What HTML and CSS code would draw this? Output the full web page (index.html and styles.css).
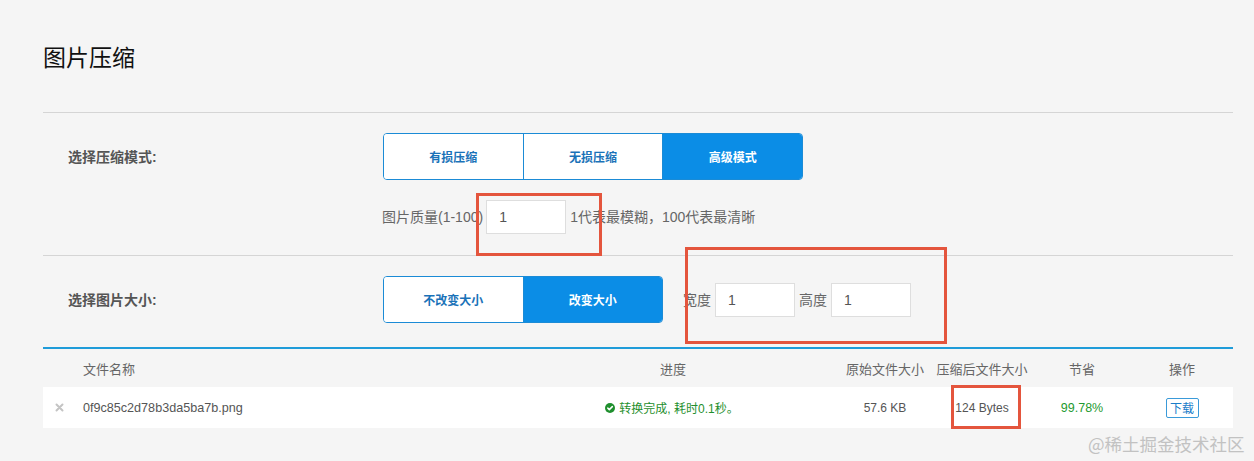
FILE: index.html
```html
<!DOCTYPE html>
<html lang="zh-CN">
<head>
<meta charset="utf-8">
<title>图片压缩</title>
<link rel="stylesheet" href="styles.css">
</head>
<body>
<div class="page">
  <h1 class="title">图片压缩</h1>

  <section class="opt">
    <div class="opt-label">选择压缩模式:</div>
    <div class="btn-group group-3">
      <button class="seg">有损压缩</button>
      <button class="seg">无损压缩</button>
      <button class="seg active">高级模式</button>
    </div>
    <div class="opt-extra">
      <span class="txt">图片质量(1-100)</span>
      <input class="field" type="text" value="1">
      <span class="txt">1代表最模糊，100代表最清晰</span>
    </div>
  </section>

  <section class="opt opt-size">
    <div class="opt-label">选择图片大小:</div>
    <div class="size-row">
      <div class="btn-group group-2">
        <button class="seg">不改变大小</button>
        <button class="seg active">改变大小</button>
      </div>
      <div class="dims">
        <span class="txt">宽度</span>
        <input class="field" type="text" value="1">
        <span class="txt">高度</span>
        <input class="field" type="text" value="1">
      </div>
    </div>
  </section>

  <div class="table">
    <div class="trow thead">
      <div class="c c-del"></div>
      <div class="c c-name">文件名称</div>
      <div class="c c-prog">进度</div>
      <div class="c c-orig">原始文件大小</div>
      <div class="c c-comp">压缩后文件大小</div>
      <div class="c c-save">节省</div>
      <div class="c c-op">操作</div>
    </div>
    <div class="trow tbody">
      <div class="c c-del">
        <svg class="del-icon" width="9" height="9" viewBox="0 0 9 9"><path d="M1.5 1.5L7.5 7.5M7.5 1.5L1.5 7.5" stroke="#c4c4c4" stroke-width="2" stroke-linecap="round"/></svg>
      </div>
      <div class="c c-name">0f9c85c2d78b3da5ba7b.png</div>
      <div class="c c-prog ok">
        <svg class="ok-icon" width="10" height="10" viewBox="0 0 10 10"><circle cx="5" cy="5" r="5" fill="#1f8f2e"/><path d="M2.8 5.1L4.3 6.6L7.3 3.6" fill="none" stroke="#fff" stroke-width="1.5" stroke-linecap="round" stroke-linejoin="round"/></svg>
        <span>转换完成, 耗时0.1秒。</span>
      </div>
      <div class="c c-orig">57.6 KB</div>
      <div class="c c-comp">124 Bytes</div>
      <div class="c c-save save">99.78%</div>
      <div class="c c-op"><button class="dl">下载</button></div>
    </div>
  </div>
</div>

<div class="mark mark-1"></div>
<div class="mark mark-2"></div>
<div class="mark mark-3"></div>
<div class="watermark">@稀土掘金技术社区</div>
</body>
</html>
```

FILE: styles.css
```css
* { box-sizing: border-box; }

html, body {
  margin: 0;
  padding: 0;
  background: #f5f5f5;
}

body {
  position: relative;
  width: 1254px;
  height: 461px;
  overflow: hidden;
  font-family: "Liberation Sans", "Noto Sans CJK SC", sans-serif;
  color: #555;
}

.page {
  padding: 0 21px 0 43px;
}

.title {
  margin: 0;
  padding: 42px 0 38px;
  font-size: 23px;
  line-height: 32px;
  font-weight: 400;
  color: #111;
}

.opt {
  border-top: 1px solid #d5d5d5;
  display: grid;
  grid-template-columns: 315px auto;
  align-items: center;
  row-gap: 20px;
  padding: 20px 0 21px 25px;
}

.opt-size {
  padding-bottom: 24px;
}

.opt-label {
  font-size: 14px;
  font-weight: 700;
  color: #555;
  line-height: 20px;
}

.opt-extra {
  grid-column: 2;
  display: flex;
  align-items: center;
  gap: 4px;
  height: 34px;
  margin-left: -1px;
}

.opt-extra .field {
  margin-left: -1px;
}

.txt {
  font-size: 14px;
  line-height: 20px;
  color: #666;
}

.field {
  width: 80px;
  height: 34px;
  border: 1px solid #dedede;
  background: #fff;
  padding: 0 12px;
  font-family: "Liberation Sans", sans-serif;
  font-size: 14px;
  color: #555;
  outline: none;
}

.btn-group {
  display: flex;
  height: 47px;
  border: 1px solid #1b8bd6;
  border-radius: 4px;
  overflow: hidden;
  justify-self: start;
}

.group-3 { width: 420px; }
.group-2 { width: 280px; }

.seg {
  flex: 1;
  border: 0;
  margin: 0;
  padding: 0;
  background: #fff;
  color: #1a72b8;
  font-family: "Liberation Sans", "Noto Sans CJK SC", sans-serif;
  font-size: 12px;
  font-weight: 700;
  cursor: pointer;
}

.seg + .seg {
  border-left: 1px solid #1b8bd6;
}

.seg.active {
  background: #0b8de6;
  color: #fff;
}

.size-row {
  display: flex;
  align-items: center;
}

.dims {
  display: flex;
  align-items: center;
  gap: 4px;
  margin-left: 20px;
}

.table {
  border-top: 2px solid #1f9cd9;
}

.trow {
  display: grid;
  grid-template-columns: 32px 432px 332px 92px 102px 98px 102px;
  align-items: center;
}

.thead {
  height: 38px;
  font-size: 13px;
  color: #666;
}

.tbody {
  height: 41px;
  background: #fff;
  font-size: 12px;
  color: #555;
}

.c {
  text-align: center;
  white-space: nowrap;
}

.c-name {
  text-align: left;
  padding-left: 8px;
}

.tbody .c-name {
  font-size: 12.6px;
}

.c-del {
  display: flex;
  justify-content: center;
  align-items: center;
}

.ok {
  display: flex;
  align-items: center;
  justify-content: center;
  gap: 4px;
  color: #1f8f2e;
  padding-left: 2px;
  padding-right: 4px;
}

.save {
  color: #1f9a30;
  font-size: 12.5px;
}

.dl {
  height: 20px;
  width: 33px;
  padding: 0;
  border: 1px solid #3a9ad9;
  border-radius: 2px;
  background: #fff;
  color: #1a7cc9;
  font-family: "Noto Sans CJK SC", sans-serif;
  font-size: 12px;
  line-height: 18px;
}

.mark {
  position: absolute;
  border: 3px solid #e4553d;
}

.mark-1 { left: 476px; top: 193px; width: 126px; height: 63px; }
.mark-2 { left: 685px; top: 247px; width: 262px; height: 97px; }
.mark-3 { left: 951px; top: 385px; width: 70px; height: 44px; }

.watermark {
  position: absolute;
  left: 1088px;
  top: 432px;
  font-family: "Noto Sans CJK SC", sans-serif;
  font-size: 17.5px;
  line-height: 24px;
  color: #c2c2c2;
  white-space: nowrap;
}
```
